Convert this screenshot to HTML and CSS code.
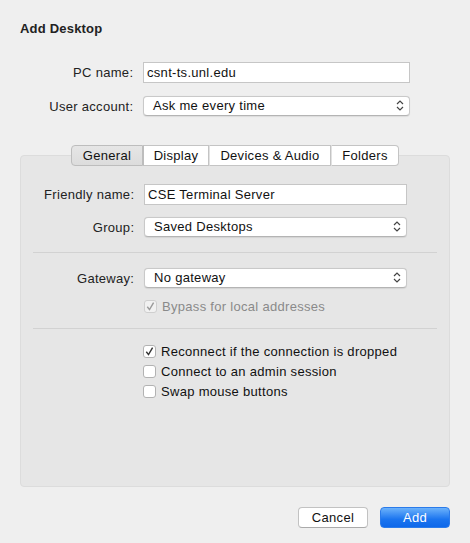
FILE: index.html
```html
<!DOCTYPE html>
<html>
<head>
<meta charset="utf-8">
<link rel="stylesheet" href="styles.css">
</head>
<body>
<div class="dialog">
  <h1 class="title">Add Desktop</h1>
  <div class="form top-form">
    <span class="lbl">PC name:</span>
    <div class="input">csnt-ts.unl.edu</div>
    <span class="lbl">User account:</span>
    <div class="select">Ask me every time<svg class="chev" width="8" height="11" viewBox="0 0 8 11"><path d="M1 4 L4 1 L7 4 M1 7 L4 10 L7 7" fill="none" stroke="#444" stroke-width="1.2"/></svg></div>
  </div>

  <div class="tabbox">
    <div class="tabs">
      <span class="tab sel t1">General</span><span class="tab t2">Display</span><span class="tab t3">Devices &amp; Audio</span><span class="tab t4">Folders</span>
    </div>
    <div class="panel">
      <div class="form panel-form">
        <span class="lbl">Friendly name:</span>
        <div class="input">CSE Terminal Server</div>
        <span class="lbl">Group:</span>
        <div class="select">Saved Desktops<svg class="chev" width="8" height="11" viewBox="0 0 8 11"><path d="M1 4 L4 1 L7 4 M1 7 L4 10 L7 7" fill="none" stroke="#444" stroke-width="1.2"/></svg></div>
      </div>
      <div class="sep"></div>
      <div class="form panel-form gw">
        <span class="lbl">Gateway:</span>
        <div class="select">No gateway<svg class="chev" width="8" height="11" viewBox="0 0 8 11"><path d="M1 4 L4 1 L7 4 M1 7 L4 10 L7 7" fill="none" stroke="#444" stroke-width="1.2"/></svg></div>
        <span></span>
        <div class="check disabled"><span class="box"><svg width="13" height="13" viewBox="0 0 13 13"><path d="M3.3 6.8 L5.5 9.6 L9.6 2.6" fill="none" stroke="#9a9a9a" stroke-width="1.4"/></svg></span>Bypass for local addresses</div>
      </div>
      <div class="sep sep2"></div>
      <div class="checks">
        <div class="check"><span class="box"><svg width="13" height="13" viewBox="0 0 13 13"><path d="M3.3 6.8 L5.5 9.6 L9.6 2.6" fill="none" stroke="#333" stroke-width="1.4"/></svg></span>Reconnect if the connection is dropped</div>
        <div class="check"><span class="box"></span>Connect to an admin session</div>
        <div class="check"><span class="box"></span>Swap mouse buttons</div>
      </div>
    </div>
  </div>

  <div class="buttons">
    <button class="btn cancel">Cancel</button>
    <button class="btn add">Add</button>
  </div>
</div>
</body>
</html>
```

FILE: styles.css
```css
html, body {
  margin: 0;
  padding: 0;
  background: #efefef;
}
body {
  font-family: "Liberation Sans", Arial, Helvetica, sans-serif;
  font-size: 13px;
  letter-spacing: 0.3px;
  color: #1a1a1a;
  width: 470px;
  height: 543px;
  overflow: hidden;
}
.dialog {
  padding: 0 20px;
}
.title {
  margin: 0;
  padding-top: 21px;
  font-size: 13px;
  line-height: 16px;
  font-weight: bold;
  letter-spacing: 0.2px;
  color: #222;
}
.form {
  display: grid;
  grid-template-columns: 113px 1fr;
  column-gap: 10px;
  align-items: center;
}
.lbl {
  text-align: right;
  color: #222;
  margin-right: -0.3px;
}
.top-form {
  margin-top: 25px;
  padding-right: 40px;
  row-gap: 13px;
}
.input {
  height: 21px;
  box-sizing: border-box;
  background: #fff;
  border: 1px solid #c6c6c6;
  padding: 0 3px;
  line-height: 19px;
  color: #111;
}
.select {
  position: relative;
  height: 20px;
  box-sizing: border-box;
  background: #fff;
  border: 1px solid #c9c9c9;
  border-bottom-color: #b4b4b4;
  border-radius: 4px;
  padding: 0 9px;
  line-height: 18px;
  color: #111;
  box-shadow: 0 0.5px 1px rgba(0,0,0,0.08);
}
.chev {
  position: absolute;
  right: 5px;
  top: 3px;
}
.tabbox {
  margin-top: 29px;
}
.tabs {
  display: flex;
  justify-content: center;
  position: relative;
  z-index: 1;
  margin-bottom: -11px;
}
.tab {
  display: block;
  height: 21px;
  box-sizing: border-box;
  line-height: 19px;
  text-align: center;
  background: #fff;
  border: 1px solid #c4c4c4;
  border-left: none;
  color: #111;
}
.tab.t1 {
  width: 72px;
  border-left: 1px solid #c4c4c4;
  border-radius: 4px 0 0 4px;
  background: linear-gradient(#e6e6e6, #dcdcdc);
  border-color: #bdbdbd;
}
.tab.t2 { width: 66px; border-left: 1px solid #bdbdbd; }
.tab.t3 { width: 122px; border-left: 1px solid #e2e2e2; }
.tab.t4 { width: 68px; border-left: 1px solid #e2e2e2; border-radius: 0 4px 4px 0; }
.panel {
  height: 332px;
  box-sizing: border-box;
  background: #e6e6e6;
  border: 1px solid #dcdcdc;
  border-radius: 4px;
  padding-top: 28px;
}
.panel-form {
  padding-right: 42px;
  row-gap: 12px;
}
.sep {
  height: 1px;
  background: #d2d2d2;
  margin: 15px 12px 15px 12px;
}
.gw {
  row-gap: 12px;
}
.sep2 {
  margin-top: 15px;
  margin-bottom: 12px;
}
.check {
  display: flex;
  align-items: center;
  height: 20px;
  color: #111;
}
.check .box {
  width: 13px;
  height: 13px;
  box-sizing: border-box;
  background: #fff;
  border: 1px solid #b2b2b2;
  border-radius: 3px;
  margin-right: 5px;
  position: relative;
  flex: none;
}
.check .box svg {
  position: absolute;
  left: -1px;
  top: -1px;
}
.check.disabled {
  color: #8a8a8a;
  height: 13px;
}
.check.disabled .box {
  background: #f1f1f1;
  border-color: #cfcfcf;
}
.checks {
  padding-left: 122px;
}
.buttons {
  display: flex;
  justify-content: flex-end;
  gap: 12px;
  margin-top: 20px;
}
.btn {
  font-family: "Liberation Sans", Arial, Helvetica, sans-serif;
  font-size: 13px;
  letter-spacing: 0.3px;
  width: 70px;
  height: 21px;
  box-sizing: border-box;
  padding: 0;
  border-radius: 4px;
  line-height: 19px;
}
.cancel {
  background: #fff;
  border: 1px solid #c2c2c2;
  border-bottom-color: #aaa;
  color: #111;
}
.add {
  background: linear-gradient(#6cb2fb, #1a74ef 60%, #0e68ea);
  border: 1px solid #2b7bea;
  color: #fff;
}
```
